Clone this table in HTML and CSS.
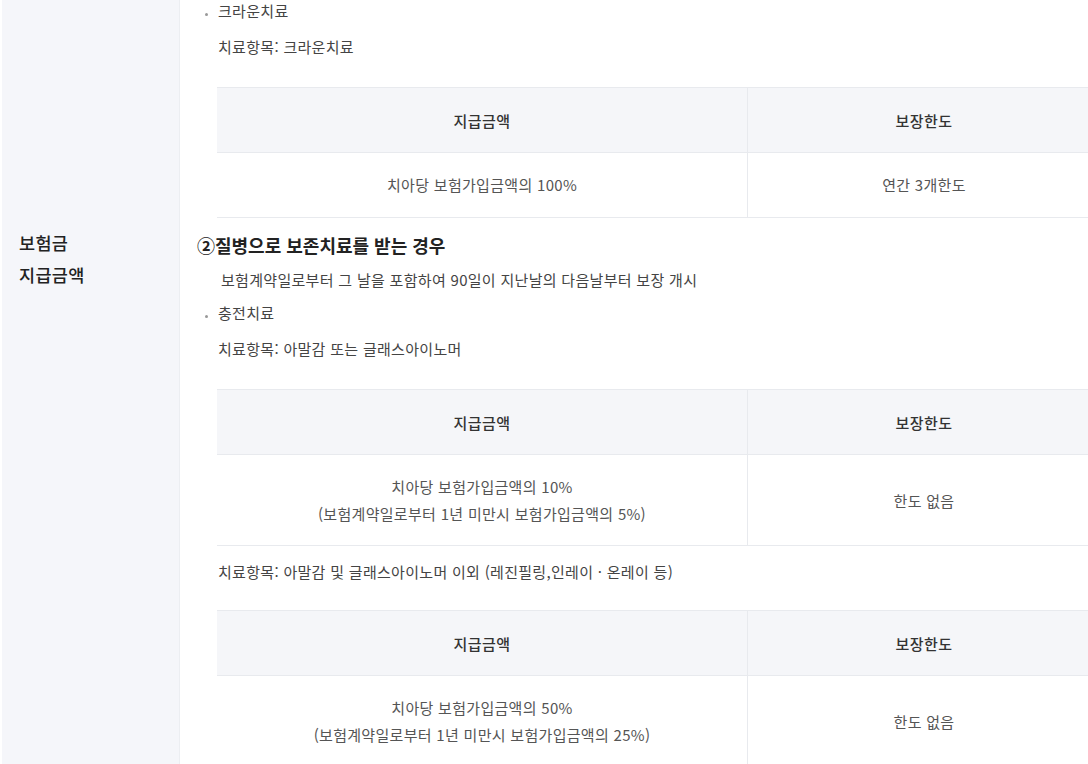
FILE: index.html
```html
<!DOCTYPE html>
<html lang="ko">
<head>
<meta charset="utf-8">
<title>보험금 지급금액</title>
<link rel="stylesheet" href="styles.css">
</head>
<body>
<div class="row">
  <div class="label">보험금<br>지급금액</div>
  <div class="content">
    <div class="bullet">크라운치료</div>
    <p class="item">치료항목: 크라운치료</p>
    <div class="tbl">
      <div class="tr head"><div class="c1">지급금액</div><div class="c2">보장한도</div></div>
      <div class="tr body"><div class="c1">치아당 보험가입금액의 100%</div><div class="c2">연간 3개한도</div></div>
    </div>

    <h3 class="heading">②질병으로 보존치료를 받는 경우</h3>
    <p class="note">보험계약일로부터 그 날을 포함하여 90일이 지난날의 다음날부터 보장 개시</p>
    <div class="bullet b2">충전치료</div>
    <p class="item">치료항목: 아말감 또는 글래스아이노머</p>
    <div class="tbl">
      <div class="tr head"><div class="c1">지급금액</div><div class="c2">보장한도</div></div>
      <div class="tr body tall"><div class="c1">치아당 보험가입금액의 10%<br>(보험계약일로부터 1년 미만시 보험가입금액의 5%)</div><div class="c2">한도 없음</div></div>
    </div>

    <p class="item after">치료항목: 아말감 및 글래스아이노머 이외 (레진필링,인레이 · 온레이 등)</p>
    <div class="tbl t3">
      <div class="tr head"><div class="c1">지급금액</div><div class="c2">보장한도</div></div>
      <div class="tr body tall"><div class="c1">치아당 보험가입금액의 50%<br>(보험계약일로부터 1년 미만시 보험가입금액의 25%)</div><div class="c2">한도 없음</div></div>
    </div>
  </div>
</div>
</body>
</html>
```
FILE: styles.css
```css
html, body {
  margin: 0;
  padding: 0;
  background: #fff;
  overflow: hidden;
  width: 1088px;
  height: 764px;
}
body {
  font-family: "Noto Sans CJK KR", "Noto Sans", sans-serif;
  color: #444;
  font-size: 15px;
  letter-spacing: 0.3px;
}
.row {
  display: flex;
  padding-left: 2px;
  min-height: 764px;
}
.label {
  flex: 0 0 auto;
  width: 160px;
  padding: 227px 0 0 17px;
  background: #f5f6fa;
  border-right: 1px solid #eceef2;
  font-size: 17.5px;
  line-height: 32px;
  font-weight: 500;
  color: #222;
}
.content {
  flex: 0 0 auto;
  width: 960px;
  padding-left: 17px;
}
.bullet {
  display: flex;
  align-items: center;
  gap: 10px;
  margin-left: 8px;
  line-height: 22px;
  color: #444;
}
.bullet::before {
  content: "";
  width: 3px;
  height: 3px;
  border-radius: 50%;
  background: #999;
  margin-top: 7px;
}
.b2 { margin-top: 11px; }
.item {
  margin: 14px 0 0 21px;
  line-height: 22px;
}
.item.after { margin-top: 15px; }
.tbl {
  margin: 29px 0 0 20px;
  width: 883px;
  border-top: 1px solid #e8eaee;
}
.tbl.t3 { margin-top: 27px; }
.tr {
  display: flex;
  border-bottom: 1px solid #e8eaee;
}
.tr > div {
  display: flex;
  align-items: center;
  justify-content: center;
  text-align: center;
}
.c1 { width: 530px; }
.c2 { flex: 1; border-left: 1px solid #e8eaee; }
.head {
  height: 64px;
  background: #f5f6f9;
  font-weight: 500;
  color: #333;
  letter-spacing: 0.5px;
}
.body {
  height: 64px;
  line-height: 22px;
  color: #555;
}
.body.tall {
  height: 90px;
  line-height: 27px;
}
.heading {
  margin: 16px 0 0 0;
  font-size: 18px;
  line-height: 22px;
  font-weight: 700;
  color: #222;
  letter-spacing: 0;
}
.note {
  margin: 13px 0 0 24px;
  line-height: 22px;
}
```
